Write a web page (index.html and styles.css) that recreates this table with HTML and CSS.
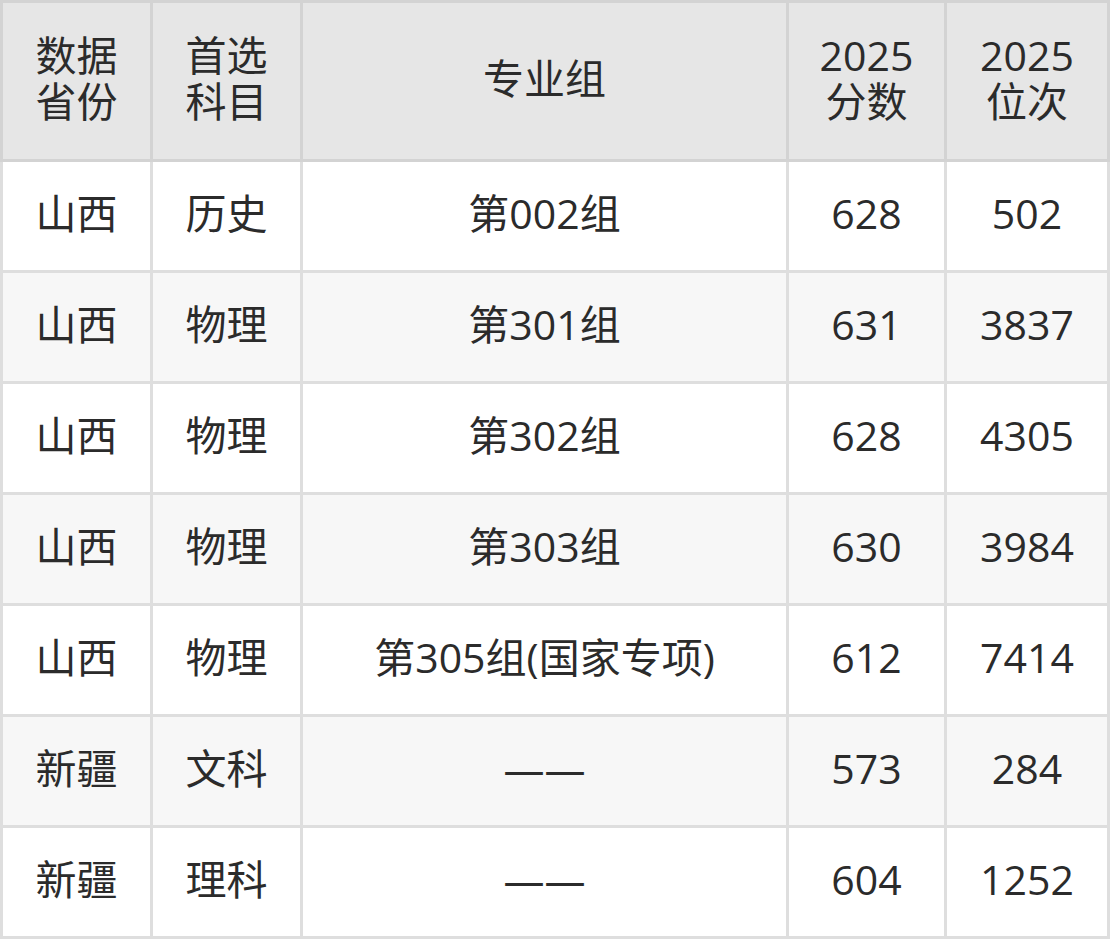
FILE: index.html
```html
<!DOCTYPE html>
<html lang="zh-CN">
<head>
<meta charset="utf-8">
<link rel="stylesheet" href="styles.css">
</head>
<body>
<table class="score-table">
  <colgroup>
    <col class="c1"><col class="c2"><col class="c3"><col class="c4"><col class="c5">
  </colgroup>
  <thead>
    <tr>
      <th>数据<br>省份</th>
      <th>首选<br>科目</th>
      <th>专业组</th>
      <th>2025<br>分数</th>
      <th>2025<br>位次</th>
    </tr>
  </thead>
  <tbody>
    <tr><td>山西</td><td>历史</td><td>第002组</td><td>628</td><td>502</td></tr>
    <tr><td>山西</td><td>物理</td><td>第301组</td><td>631</td><td>3837</td></tr>
    <tr><td>山西</td><td>物理</td><td>第302组</td><td>628</td><td>4305</td></tr>
    <tr><td>山西</td><td>物理</td><td>第303组</td><td>630</td><td>3984</td></tr>
    <tr><td>山西</td><td>物理</td><td>第305组(国家专项)</td><td>612</td><td>7414</td></tr>
    <tr><td>新疆</td><td>文科</td><td>——</td><td>573</td><td>284</td></tr>
    <tr><td>新疆</td><td>理科</td><td>——</td><td>604</td><td>1252</td></tr>
  </tbody>
</table>
</body>
</html>
```
FILE: styles.css
```css
html, body {
  margin: 0;
  padding: 0;
  background: #ffffff;
}

.score-table {
  width: 1110px;
  table-layout: fixed;
  border-collapse: separate;
  border-spacing: 0;
  font-family: "Open Sans", "Noto Sans CJK SC", sans-serif;
  font-size: 41px;
  color: #2b2b2b;
}

.c1 { width: 153px; }
.c2 { width: 150px; }
.c3 { width: 486px; }
.c4 { width: 158px; }
.c5 { width: 163px; }

.score-table th,
.score-table td {
  box-sizing: border-box;
  padding: 0;
  text-align: center;
  vertical-align: middle;
  font-weight: 400;
  border-right: 3px solid #dedede;
  border-bottom: 3px solid #dedede;
}

.score-table th {
  height: 162px;
  line-height: 46px;
  background: #e6e6e6;
  border-color: #d3d3d3;
  border-top: 3px solid #d3d3d3;
  padding-bottom: 6px;
}

.score-table td {
  height: 111px;
  line-height: 48px;
  padding-bottom: 7px;
}

.score-table th:first-child,
.score-table td:first-child {
  border-left: 3px solid #dedede;
}

.score-table th:first-child {
  border-left-color: #d3d3d3;
}

.score-table tbody tr:nth-child(even) td {
  background: #f7f7f7;
}
```
